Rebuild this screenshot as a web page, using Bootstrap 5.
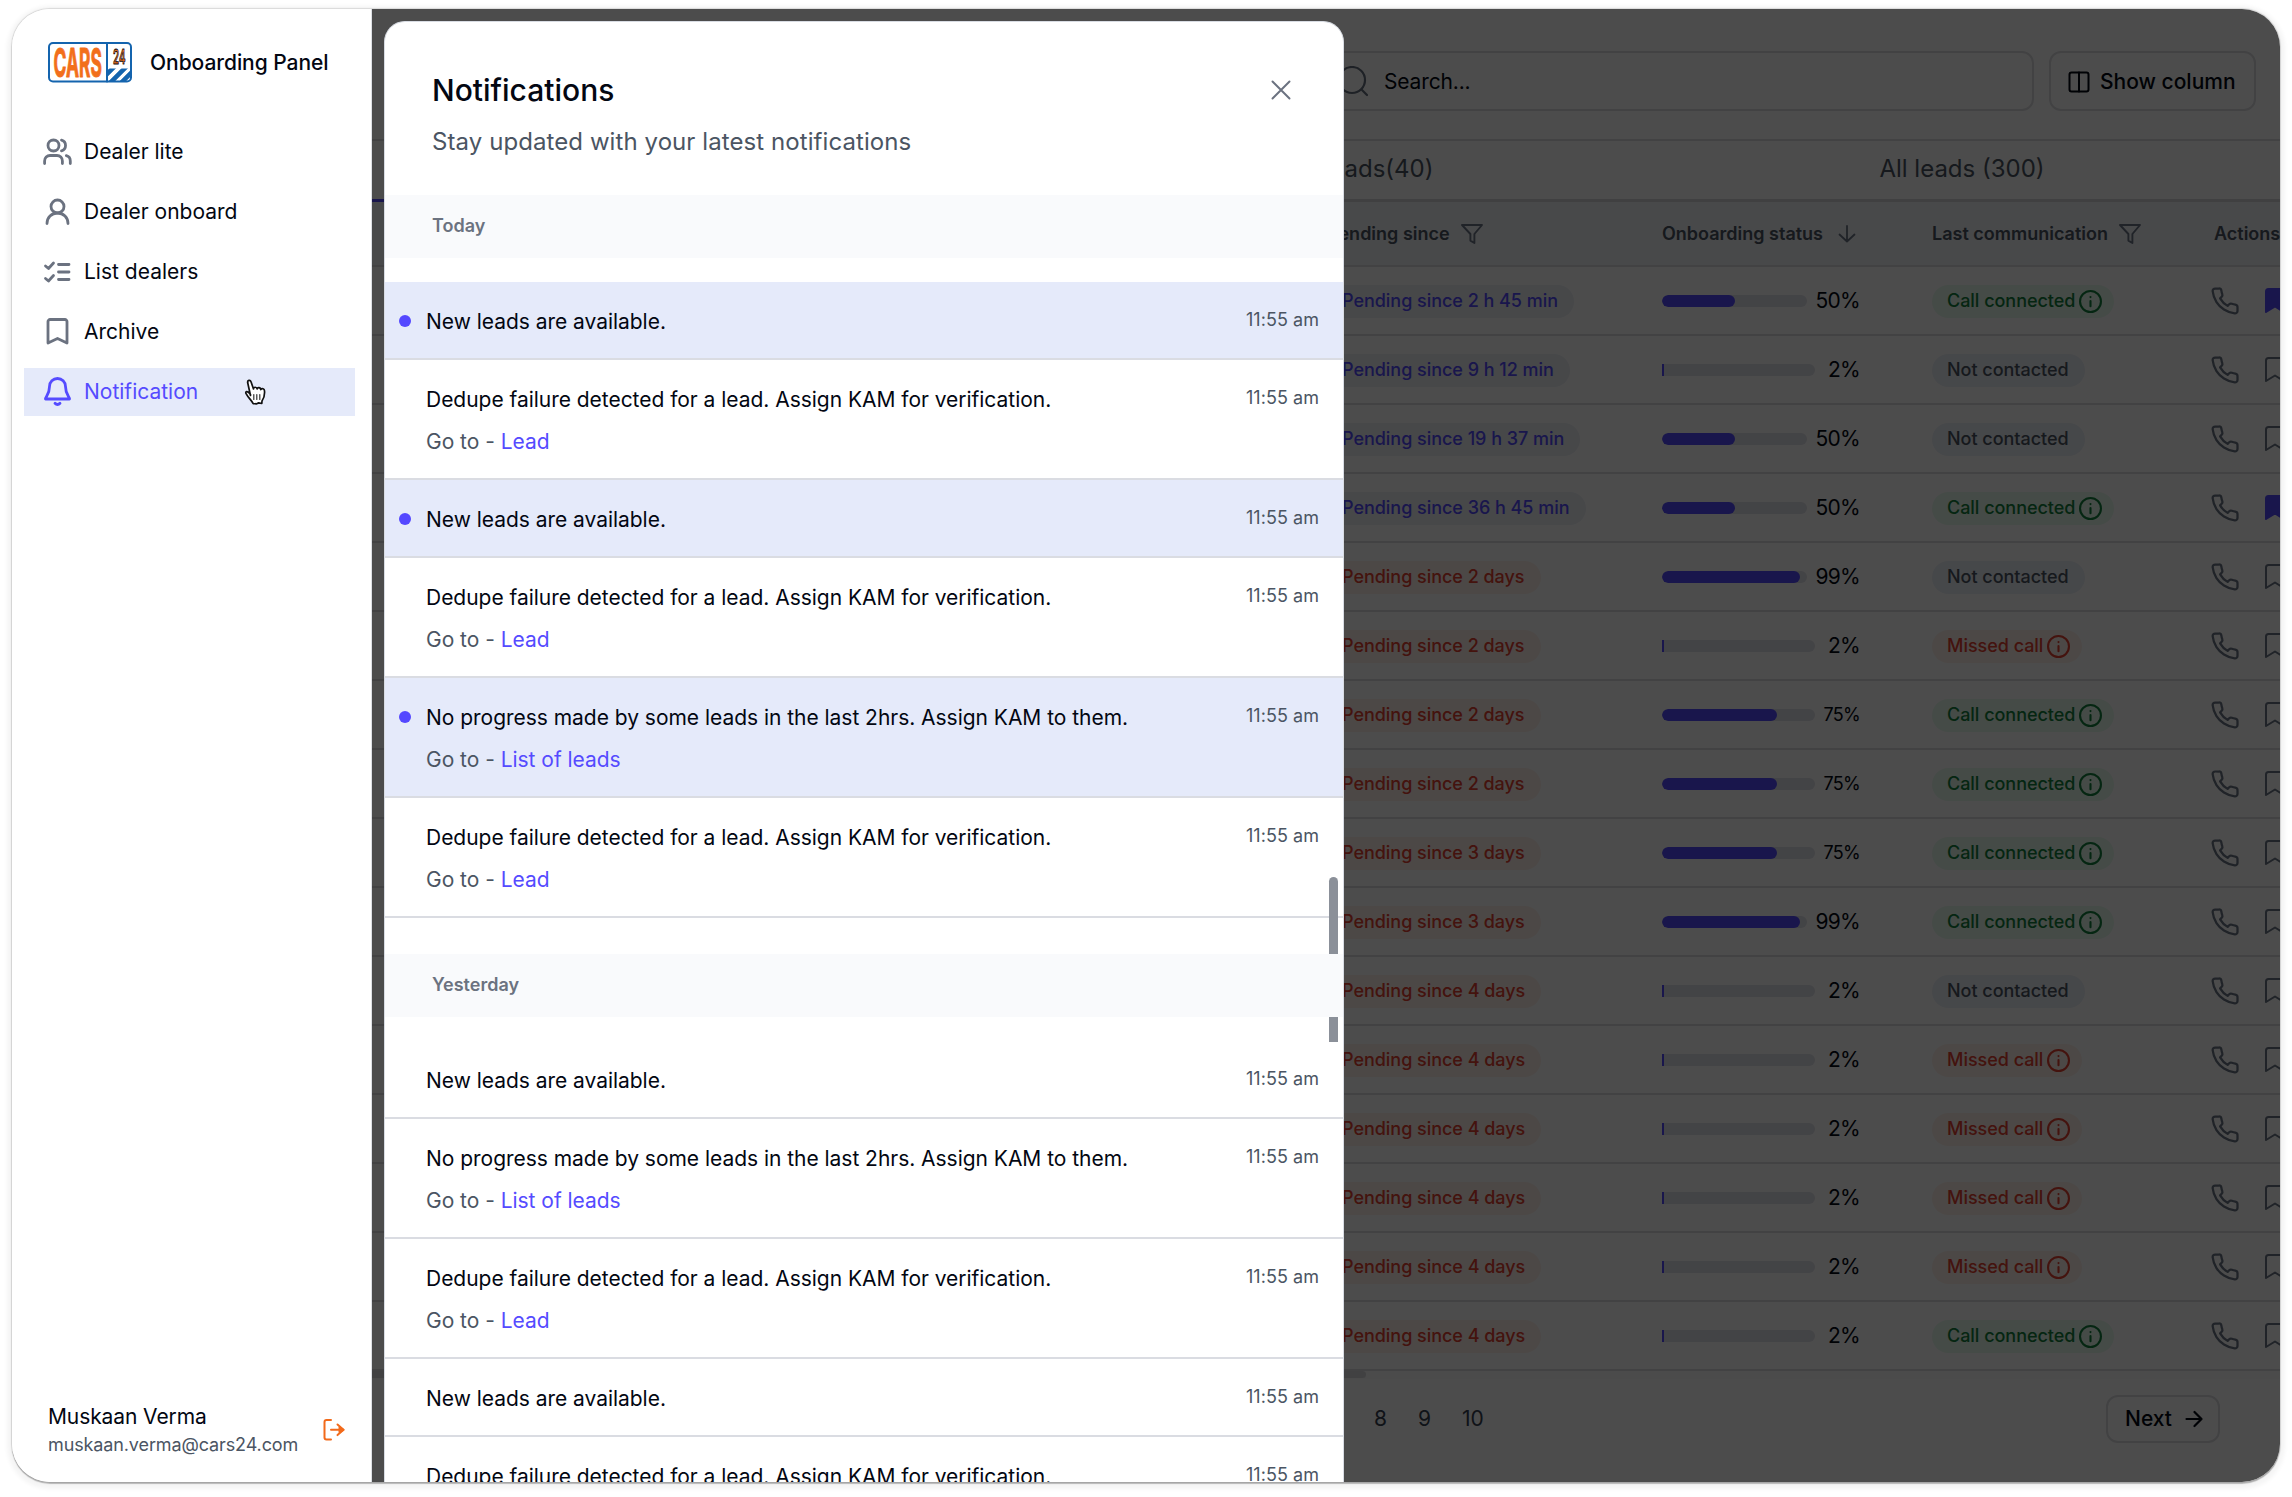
<!DOCTYPE html>
<html lang="en">
<head>
<meta charset="utf-8">
<title>Onboarding Panel</title>
<link href="https://cdn.jsdelivr.net/npm/bootstrap@5.3.0/dist/css/bootstrap.min.css" rel="stylesheet">
<style>
  :root { --brand: #554bff; --ink: #030712; --muted: #4b5563; --soft: #6b7280; --line: #dadce2; --tint: #e5eafa; }
  html, body { height: 100%; overflow: hidden; }
  body { font-family: Inter, "Liberation Sans", sans-serif; font-size: 21px; line-height: 30px; color: var(--ink); background: #fff; padding: 9px 12px 15px; }
  svg { display: block; flex: none; fill: none; stroke: currentColor; stroke-linecap: round; stroke-linejoin: round; }
  .app-window { height: 1473px; border-radius: 38px; overflow: hidden; position: relative; background: #fff; }
  .app-frame { border-radius: 38px; box-shadow: 0 2px 1px rgba(0,0,0,.24), 0 0 1px 1px rgba(0,0,0,.12), 0 2px 4px 5px rgba(0,0,0,.045); }

  .side { width: 360px; border-right: 1px solid #dcdfe4; }
  .brand-row { padding: 33px 0 0 36px; gap: 18px; height: 119px; align-items: flex-start; }
  .brand-title { font-weight: 500; line-height: 41px; letter-spacing: -.05px; white-space: nowrap; }
  .side-nav { padding-left: 12px; padding-right: 16px; gap: 12px; }
  .side-item { height: 48px; padding-left: 19px; gap: 12px; color: var(--ink); }
  .side-item svg { color: var(--soft); margin-bottom: 2px; }
  .side-item.current, .side-item.current svg { color: var(--brand); }
  .side-item.current { background: var(--tint); }
  .user-row { padding: 0 26px 24px 36px; }
  .user-name { letter-spacing: -.1px; }
  .user-mail { font-size: 18px; line-height: 26px; color: var(--muted); letter-spacing: -.12px; }
  .logout { color: #f26a1b; }
  .hand { position: absolute; left: 230px; top: 370px; }

  .page-area { width: 1908px; }
  .top-tools { height: 130px; padding: 42px 24px 0 900px; gap: 15px; align-items: flex-start; }
  .tool-box { height: 60px; border: 2px solid #dcdde1; border-radius: 12px; padding-top: 1px; }
  .search-box { padding-left: 64px; gap: 16px; letter-spacing: -.15px; }
  .search-box svg { color: #66707f; }
  .cols-btn { width: 207px; padding-left: 17px; gap: 10px; font-weight: 500; }
  .tab-strip { height: 63px; border-top: 2px solid #dcdde1; border-bottom: 3px solid #d5d6da; font-size: 24px; color: var(--muted); }
  .tab-cell { width: 636px; line-height: 55px; text-align: center; }
  .tab-cell.active { box-shadow: 0 3px 0 var(--brand); }
  .tab-cell .shifted { padding-left: 106px; }
  .leads { table-layout: fixed; border-collapse: separate; border-spacing: 0; margin: 0; width: 2000px; color: inherit; }
  .leads > thead > tr > th, .leads > tbody > tr > td { padding: 0; vertical-align: middle; border: 0; border-bottom: 2px solid #dcdde1; background: none; box-shadow: none; }
  .leads > thead > tr > th { height: 65px; background: #f1f3f8; font-size: 18px; font-weight: 600; color: #4b5563; white-space: nowrap; }
  .leads > tbody > tr > td { height: 69px; padding-top: 1px; }
  .th-in { gap: 11px; }
  .th-in svg { color: #6b7686; }
  .chip { display: inline-flex; align-items: center; height: 33px; padding: 0 16px 0 15px; gap: 4px; border-radius: 17px; font-size: 18px; font-weight: 500; white-space: nowrap; vertical-align: middle; letter-spacing: -.03px; }
  .chip.info-end { padding-right: 12px; }
  .chip-blue { color: var(--brand); background: #edf0f6; }
  .chip-red { color: #e4402f; background: #fff1eb; }
  .chip-green { color: #12803c; background: #e7faee; }
  .chip-gray { color: #4b5563; background: #ecf0f8; }
  .meter-row { width: 198px; }
  .meter { height: 12px; border-radius: 6px; background: #e2e3e9; overflow: hidden; }
  .meter > i { display: block; height: 100%; background: var(--brand); border-radius: 6px; }
  .meter.sliver { border-radius: 0 6px 6px 0; }
  .meter.sliver > i { border-radius: 0; }
  .pct { letter-spacing: -.7px; }
  .pct75 { font-size: 18px; }
  .acts { gap: 26px; color: #6b7686; }
  .x-track { height: 8px; background: #fafafa; }
  .x-track i { display: block; width: 994px; height: 7px; background: #d9dade; border-radius: 0 4px 4px 0; }
  .pager { padding: 16px 60px 0 1002px; align-items: flex-start; color: #374151; }
  .pager span { line-height: 48px; margin-right: 31px; }
  .next-btn { width: 114px; height: 48px; border: 2px solid #dcdde1; border-radius: 12px; padding-left: 17px; gap: 13px; color: var(--ink); font-weight: 500; }

  .dim { position: absolute; left: 360px; top: 0; right: 0; bottom: 0; background: rgba(0,0,0,.7); }
  .panel { position: absolute; left: 372px; top: 12px; width: 960px; height: 1461px; background: #fff; border: 1px solid #d8dce3; border-bottom: 0; border-radius: 21px 21px 0 0; overflow: hidden; }
  .panel-head { height: 173px; padding: 49px 48px 0 47px; }
  .panel-title { font-size: 30px; font-weight: 500; line-height: 38px; margin: 0; }
  .panel-sub { font-size: 24px; line-height: 32px; margin: 17px 0 0; color: var(--muted); letter-spacing: .08px; }
  .day-band { height: 63px; line-height: 62px; padding-left: 47px; background: #f9fafc; font-size: 18px; font-weight: 600; color: var(--soft); position: relative; z-index: 2; }
  .note { padding: 25px 24px 21px 14px; border-bottom: 2px solid var(--line); letter-spacing: -.03px; }
  .note.fresh { background: var(--tint); }
  .note-dot { width: 12px; height: 12px; border-radius: 50%; margin: 8px 15px 0 0; }
  .fresh .note-dot { background: #5448ff; }
  .go { margin-top: 12px; color: var(--muted); }
  .go a { color: var(--brand); text-decoration: none; }
  .when { font-size: 18px; line-height: 26px; color: var(--muted); letter-spacing: .05px; }
  .thumb { position: absolute; right: 5px; top: 855px; width: 9px; height: 165px; border-radius: 5px 5px 0 0; background: #8b9099; }
</style>
<script src="https://cdn.jsdelivr.net/npm/bootstrap@5.3.0/dist/js/bootstrap.bundle.min.js"></script>
</head>
<body>
<svg width="0" height="0" class="position-absolute">
  <symbol id="i-funnel" viewBox="0 0 22 20"><path d="M1 1h20l-7.600 9v9l-4-2.400v-6.600z"/></symbol>
  <symbol id="i-info" viewBox="0 0 22 22"><circle cx="11" cy="11" r="10"/><path d="M11 10.500v5M11 6.700v.1"/></symbol>
  <symbol id="i-phone" viewBox="0 0 24 24"><path d="M22 16.920v3a2 2 0 0 1-2.180 2 19.790 19.790 0 0 1-8.630-3.070 19.500 19.500 0 0 1-6-6A19.790 19.790 0 0 1 2.120 4.180 2 2 0 0 1 4.110 2h3a2 2 0 0 1 2 1.720c.127.960.361 1.903.700 2.810a2 2 0 0 1-.450 2.110L8.090 9.910a16 16 0 0 0 6 6l1.270-1.270a2 2 0 0 1 2.110-.450c.907.339 1.850.573 2.810.700A2 2 0 0 1 22 16.920z"/></symbol>
  <symbol id="i-mark" viewBox="0 0 24 28"><path d="M3 25V4.500C3 3 4 2 5.500 2h13C20 2 21 3 21 4.500V25l-9-5.500z"/></symbol>
</svg>

<div class="app-frame">
<div class="app-window d-flex">
  <aside class="side d-flex flex-column flex-shrink-0">
    <div class="brand-row d-flex">
      <svg width="84" height="41" viewBox="0 0 84 41" stroke="none">
        <rect x="1" y="1" width="82" height="38.500" rx="4" fill="#fff" stroke="#1464ae" stroke-width="2"/>
        <clipPath id="stripes"><path d="M59.500 26.500H82.500V35q0 4-4 4H59.500z"/></clipPath>
        <g clip-path="url(#stripes)" stroke="#1464ae" stroke-width="4.600" stroke-linecap="butt">
          <path d="M50 41L68 23M60 43L80 23M69 45L89 25"/>
        </g>
        <path d="M59 1v38.500" stroke="#1464ae" stroke-width="2"/>
        <g transform="translate(5.500 34.500) scale(.46 1)"><text font-size="39" font-weight="700" fill="#f26f1b" stroke="#f26f1b" stroke-width="1" textLength="105" lengthAdjust="spacingAndGlyphs">CARS</text></g>
        <g transform="translate(65 21.500) scale(.5 1)"><text font-size="20.500" font-weight="600" fill="#f26f1b" textLength="25" lengthAdjust="spacingAndGlyphs">24</text></g>
      </svg>
      <div class="brand-title">Onboarding Panel</div>
    </div>
    <nav class="side-nav d-flex flex-column">
      <a class="side-item d-flex align-items-center text-decoration-none" href="#">
        <svg width="29" height="27" viewBox="0 0 29 27" stroke-width="2.800"><circle cx="10.500" cy="7.500" r="5.500"/><path d="M1.600 25.500v-2.600a5.400 5.400 0 0 1 5.400-5.400h7a5.400 5.400 0 0 1 5.400 5.400v2.600M18.500 2.200a5.500 5.500 0 0 1 0 10.600M27.300 25.500v-2.600a5.400 5.400 0 0 0-4-5.200"/></svg>Dealer lite</a>
      <a class="side-item d-flex align-items-center text-decoration-none" href="#">
        <svg width="29" height="27" viewBox="0 0 29 27" stroke-width="2.800"><circle cx="14.500" cy="8.500" r="6.500"/><path d="M4 25.500c0-6 4.500-10.500 10.500-10.500S25 19.500 25 25.500"/></svg>Dealer onboard</a>
      <a class="side-item d-flex align-items-center text-decoration-none" href="#">
        <svg width="29" height="27" viewBox="0 0 29 27" stroke-width="2.800"><path d="M2.500 8l3 2.500 5-5.500M2.500 20.500l3 2.500 5-5.500M15.500 6.500H26M15.500 14H26M15.500 21.500H26"/></svg>List dealers</a>
      <a class="side-item d-flex align-items-center text-decoration-none" href="#">
        <svg width="29" height="27" viewBox="0 0 29 27" stroke-width="2.800"><path d="M5 25V3.500C5 2.500 6 1.500 7 1.500h15c1 0 2 1 2 2V25l-9.500-4.500z"/></svg>Archive</a>
      <a class="side-item current d-flex align-items-center text-decoration-none" href="#">
        <svg width="29" height="30" viewBox="0 0 29 30" stroke-width="2.800"><path d="M6.500 10.500a8 8 0 0 1 16 0c0 8 4 10 4 12.500h-24c0-2.500 4-4.500 4-12.500zM12 27.200c1.500 1.700 3.500 1.700 5 0"/></svg>Notification</a>
    </nav>
    <div class="user-row d-flex align-items-center justify-content-between mt-auto">
      <div><div class="user-name">Muskaan Verma</div><div class="user-mail">muskaan.verma@cars24.com</div></div>
      <svg class="logout" width="22" height="22" viewBox="0 0 22 22" stroke-width="2"><path d="M8 1H3.500C2.200 1 1.500 1.700 1.500 3v15.500c0 1.300.7 2 2 2H8M8 10.800h12M14.500 5.500l6 5.300-6 5.300"/><path d="M16.500 8.500v4.600l4-2.300z" fill="currentColor"/></svg>
    </div>
  </aside>

  <main class="page-area flex-shrink-0">
    <div class="top-tools d-flex">
      <div class="tool-box search-box flex-fill d-flex align-items-center">
        <svg width="30" height="31" viewBox="0 0 30 31" stroke-width="2.200"><circle cx="14" cy="14" r="13"/><path d="M23.500 23.500l5.500 5.500"/></svg>Search...
      </div>
      <div class="tool-box cols-btn d-flex align-items-center">
        <svg width="22" height="22" viewBox="0 0 22 22" stroke-width="2"><rect x="1.500" y="1.500" width="19" height="19" rx="2"/><path d="M11 1.500v19"/></svg>Show column
      </div>
    </div>
    <div class="tab-strip d-flex">
      <div class="tab-cell active"></div>
      <div class="tab-cell"><span class="shifted">leads(40)</span></div>
      <div class="tab-cell">All leads (300)</div>
    </div>
    <table class="table leads">
      <colgroup><col style="width:955px"><col style="width:335px"><col style="width:270px"><col style="width:279px"><col></colgroup>
      <thead><tr>
        <th></th>
        <th><div class="th-in d-flex align-items-center">Pending since<svg width="22" height="20" stroke-width="1.900"><use href="#i-funnel"/></svg></div></th>
        <th><div class="th-in d-flex align-items-center">Onboarding status<svg class="ms-1" width="18" height="18" viewBox="0 0 18 18" stroke-width="1.800"><path d="M9 1v15.500M1.500 9.500L9 16.500l7.500-7"/></svg></div></th>
        <th><div class="th-in d-flex align-items-center">Last communication<svg width="22" height="20" stroke-width="1.900"><use href="#i-funnel"/></svg></div></th>
        <th><span style="padding-left:3px">Actions</span></th>
      </tr></thead>
      <tbody id="lead-rows"></tbody>
    </table>
    <div class="x-track"><i></i></div>
    <div class="pager d-flex">
      <span>8</span><span>9</span><span>10</span>
      <div class="next-btn d-flex align-items-center ms-auto">Next<svg width="18" height="18" viewBox="0 0 18 18" stroke-width="2.200"><path d="M1.500 9h15M9.500 2l7 7-7 7"/></svg></div>
    </div>
  </main>

  <div class="dim"></div>

  <section class="panel">
    <div class="panel-head d-flex justify-content-between">
      <div>
        <h1 class="panel-title">Notifications</h1>
        <p class="panel-sub">Stay updated with your latest notifications</p>
      </div>
      <svg class="me-1" width="20" height="20" viewBox="0 0 20 20" stroke-width="2" style="color:var(--soft);margin-top:9px"><path d="M1.500 1.500l17 17M18.500 1.500l-17 17"/></svg>
    </div>
    <div class="day-band">Today</div>
    <div class="pt-4" id="today"></div>
    <div class="day-band" style="margin-top:36px">Yesterday</div>
    <div class="pt-4" id="yesterday"></div>
    <div class="thumb"></div>
  </section>

  <svg class="hand" width="25" height="27" viewBox="0 0 25 27"><path d="M8.500 16.500L5.700 3.800C5.200 1 8.300.5 9.100 3l2.400 7c0-2.400 3.300-2.300 3.600 0 .6-2.200 3.500-1.600 3.700.6 1.200-1.700 3.600-.8 3.700 1.200.4 4.700-.6 7.700-2.500 10.200l-.2 2.500-3.100-.6-2 .9-3.500-.2c-1.500-3-5-6-6.800-9.500C2.500 12.500 5.500 11 8.500 15.500" fill="#fff" stroke="#111" stroke-width="1.700"/><path d="M11.800 15.500v5M14.800 15.500v5M17.800 15.500v5" stroke="#333" stroke-width="1.200"/></svg>
</div>
</div>

<script>
  // [pending text, percent, communication, bookmarked]
  const leads = [
    ['2 h 45 min', 50, 'c', 1], ['9 h 12 min', 2, 'n'], ['19 h 37 min', 50, 'n'], ['36 h 45 min', 50, 'c', 1],
    ['2 days', 99, 'n'], ['2 days', 2, 'm'], ['2 days', 75, 'c'], ['2 days', 75, 'c'],
    ['3 days', 75, 'c'], ['3 days', 99, 'c'], ['4 days', 2, 'n'], ['4 days', 2, 'm'],
    ['4 days', 2, 'm'], ['4 days', 2, 'm'], ['4 days', 2, 'm'], ['4 days', 2, 'c']
  ];
  const info = '<svg width="23" height="23" stroke-width="2"><use href="#i-info"/></svg>';
  const comm = {
    c: `<span class="chip chip-green info-end">Call connected${info}</span>`,
    m: `<span class="chip chip-red info-end">Missed call${info}</span>`,
    n: '<span class="chip chip-gray">Not contacted</span>'
  };
  const track = { 50: [145, 73], 2: [153, 2], 75: [153, 115], 99: [145, 138] };
  document.getElementById('lead-rows').innerHTML = leads.map(([p, pct, c, b]) => `
    <tr><td></td>
      <td><span class="chip ${p.includes('days') ? 'chip-red' : 'chip-blue'}">Pending since ${p}</span></td>
      <td><div class="meter-row d-flex align-items-center justify-content-between">
        <div class="meter ${pct === 2 ? 'sliver' : ''}" style="width:${track[pct][0]}px"><i style="width:${track[pct][1]}px"></i></div>
        <span class="pct ${pct === 75 ? 'pct75' : ''}">${pct}%</span></div></td>
      <td>${comm[c]}</td>
      <td><div class="acts d-flex align-items-center">
        <svg width="30" height="30" stroke-width="1.800" style="margin-left:-1px"><use href="#i-phone"/></svg>
        <svg width="24" height="28" stroke-width="2" style="margin-left:-3px${b ? ';color:var(--brand);fill:currentColor' : ''}"><use href="#i-mark"/></svg>
      </div></td></tr>`).join('');

  // [message, link label, unread]
  const NEW = 'New leads are available.', DEDUPE = 'Dedupe failure detected for a lead. Assign KAM for verification.',
        STALE = 'No progress made by some leads in the last 2hrs. Assign KAM to them.';
  const note = ([msg, link, fresh]) => `
    <div class="note d-flex ${fresh ? 'fresh' : ''}">
      <span class="note-dot"></span>
      <div class="flex-fill"><div>${msg}</div>${link ? `<div class="go">Go to - <a href="#">${link}</a></div>` : ''}</div>
      <div class="when">11:55 am</div>
    </div>`;
  document.getElementById('today').innerHTML = [[NEW, '', 1], [DEDUPE, 'Lead'], [NEW, '', 1], [DEDUPE, 'Lead'], [STALE, 'List of leads', 1], [DEDUPE, 'Lead']].map(note).join('');
  document.getElementById('yesterday').innerHTML = [[NEW], [STALE, 'List of leads'], [DEDUPE, 'Lead'], [NEW], [DEDUPE, 'Lead']].map(note).join('');
</script>
</body>
</html>
